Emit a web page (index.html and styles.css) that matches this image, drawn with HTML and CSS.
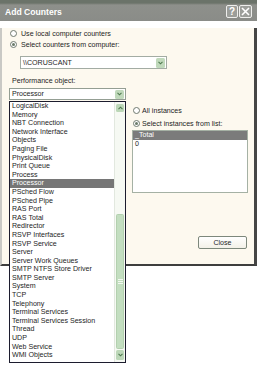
FILE: index.html
```html
<!DOCTYPE html>
<html>
<head>
<meta charset="utf-8">
<link rel="stylesheet" href="styles.css">
</head>
<body>
<div class="page">
<div class="dialog">
  <div class="titlebar">
    <span class="title">Add Counters</span>
    <div class="tbtns">
      <span class="tbtn">?</span>
      <span class="tbtn x"><svg width="9" height="9" viewBox="0 0 9 9"><path d="M1 1L8 8M8 1L1 8" stroke="#fff" stroke-width="1.6"/></svg></span>
    </div>
  </div>
  <div class="frame">
    <div class="radio r1"><span class="rb"></span>Use local computer counters</div>
    <div class="radio"><span class="rb on"></span>Select counters from computer:</div>
    <div class="combo machine"><span>\\CORUSCANT</span><span class="dd"><svg width="5" height="4" viewBox="0 0 5 4"><path d="M0.5 0.8L2.5 2.8L4.5 0.8" fill="none" stroke="#4f7a4f" stroke-width="1.1"/></svg></span></div>
    <div class="lbl">Performance object:</div>
    <div class="cols">
      <div class="leftcol">
        <div class="combo obj"><span>Processor</span><span class="dd"><svg width="5" height="4" viewBox="0 0 5 4"><path d="M0.5 0.8L2.5 2.8L4.5 0.8" fill="none" stroke="#4f7a4f" stroke-width="1.1"/></svg></span></div>
        <div class="droplist">
          <div class="items">
            <div class="item">LogicalDisk</div>
            <div class="item">Memory</div>
            <div class="item">NBT Connection</div>
            <div class="item">Network Interface</div>
            <div class="item">Objects</div>
            <div class="item">Paging File</div>
            <div class="item">PhysicalDisk</div>
            <div class="item">Print Queue</div>
            <div class="item">Process</div>
            <div class="item sel">Processor</div>
            <div class="item">PSched Flow</div>
            <div class="item">PSched Pipe</div>
            <div class="item">RAS Port</div>
            <div class="item">RAS Total</div>
            <div class="item">Redirector</div>
            <div class="item">RSVP Interfaces</div>
            <div class="item">RSVP Service</div>
            <div class="item">Server</div>
            <div class="item">Server Work Queues</div>
            <div class="item">SMTP NTFS Store Driver</div>
            <div class="item">SMTP Server</div>
            <div class="item">System</div>
            <div class="item">TCP</div>
            <div class="item">Telephony</div>
            <div class="item">Terminal Services</div>
            <div class="item">Terminal Services Session</div>
            <div class="item">Thread</div>
            <div class="item">UDP</div>
            <div class="item">Web Service</div>
            <div class="item">WMI Objects</div>
          </div>
          <div class="sb">
            <div class="sbtn up"><svg width="5" height="4" viewBox="0 0 5 4"><path d="M0.5 3.2L2.5 1.2L4.5 3.2" fill="none" stroke="#4f7a4f" stroke-width="1.1"/></svg></div>
            <div class="track"></div>
            <div class="thumb"><span class="grip"></span></div>
            <div class="sbtn down"><svg width="5" height="4" viewBox="0 0 5 4"><path d="M0.5 0.8L2.5 2.8L4.5 0.8" fill="none" stroke="#4f7a4f" stroke-width="1.1"/></svg></div>
          </div>
        </div>
      </div>
      <div class="rightcol">
        <div class="radio small r3"><span class="rb"></span>All instances</div>
        <div class="radio small r4"><span class="rb on"></span>Select instances from list:</div>
        <div class="listbox">
          <div class="row sel">_Total</div>
          <div class="row">0</div>
        </div>
        <div class="btn">Close</div>
      </div>
    </div>
  </div>
</div>
</div>
</body>
</html>
```
FILE: styles.css
```css
* { box-sizing: border-box; }
html, body { min-height: 365px; }
body {
  margin: 0;
  background: #fff;
  font-family: "Liberation Sans", Arial, sans-serif;
  font-size: 7.1px;
  color: #1e1e1e;
}
.page { min-height: 365px; }
.dialog { width: 257px; }
.titlebar {
  height: 21px;
  background: linear-gradient(#6b7369 0, #6b7369 3px, #8e908b 5px, #8a8c88 100%);
  display: flex;
  align-items: center;
  justify-content: space-between;
  padding: 0 5px 0 5px;
}
.title {
  color: #fff;
  font-weight: bold;
  font-size: 8.6px;
  margin-top: 3px;
}
.tbtns { display: flex; gap: 1px; margin-top: 2px; }
.tbtn {
  width: 12px;
  height: 13px;
  border: 1px solid #eeeeec;
  border-radius: 2px;
  background: #9c9e9a;
  color: #fff;
  font-size: 10px;
  font-weight: bold;
  display: flex;
  align-items: center;
  justify-content: center;
}
.tbtn.x { width: 13px; }
.frame {
  height: 238px;
  background: #fdf9ef;
  border-left: 2px solid #c9c9c5;
  border-right: 3px solid #464646;
  border-bottom: 2px solid #3e3e3e;
  padding-left: 8px;
}
.radio {
  display: flex;
  align-items: center;
  height: 11px;
  gap: 4px;
  white-space: nowrap;
}
.r1 { margin-top: 7px; }
.rb {
  flex: none;
  width: 7px;
  height: 7px;
  border-radius: 50%;
  border: 1px solid #6f7a70;
  background: #fff;
  position: relative;
}
.rb.on::after {
  content: "";
  position: absolute;
  inset: 1px;
  border-radius: 50%;
  background: #6b7b69;
}
.combo {
  display: flex;
  align-items: center;
  background: #fff;
  padding-left: 2px;
}
.combo .dd {
  margin-left: auto;
  margin-right: 1px;
  width: 9px;
  background: #c0d9bb;
  border-radius: 1.5px;
  display: flex;
  align-items: center;
  justify-content: center;
}
.machine {
  margin: 6px 0 0 10px;
  width: 147px;
  height: 13px;
  border: 1px solid #a3aca3;
}
.machine .dd { height: 10px; }
.lbl {
  margin: 7px 0 0 2px;
  height: 10px;
  line-height: 10px;
}
.cols {
  display: flex;
  gap: 6px;
  margin: 2px 0 0 -1px;
}
.leftcol { width: 117px; position: relative; }
.obj {
  height: 12px;
  border: 1px solid #949e93;
}
.obj .dd { height: 9px; }
.droplist {
  position: absolute;
  left: 0;
  top: 13px;
  width: 117px;
  height: 262px;
  background: #fff;
  border: 1px solid #1c1c2e;
  display: flex;
  z-index: 2;
}
.items { flex: 1; }
.item {
  height: 8.6px;
  line-height: 8.6px;
  padding-left: 2px;
  white-space: nowrap;
}
.item.sel { background: #767676; color: #fff; }
.sb {
  width: 11px;
  display: flex;
  flex-direction: column;
  padding: 2px 1px;
  background: #f6f9f3;
  border-left: 1px solid #e2e8df;
}
.sbtn {
  background: #bcd7b8;
  border-radius: 1.5px;
  display: flex;
  align-items: center;
  justify-content: center;
}
.sbtn.up { height: 8px; }
.sbtn.down { height: 10px; margin-top: 1px; }
.track { flex: 1; }
.thumb {
  height: 135px;
  background: #c3dec0;
  border: 1px solid #b3d0af;
  border-radius: 1.5px;
  display: flex;
  align-items: center;
  justify-content: center;
}
.grip {
  width: 5px;
  height: 5px;
  border-top: 1px solid #f2f8f0;
  border-bottom: 1px solid #f2f8f0;
  position: relative;
}
.grip::after {
  content: "";
  position: absolute;
  left: 0;
  right: 0;
  top: 1px;
  border-top: 1px solid #f2f8f0;
}
.rightcol {
  width: 116px;
  display: flex;
  flex-direction: column;
}
.radio.small { gap: 2px; margin-left: 1px; }
.r3 { margin-top: 17px; }
.r4 { margin-top: 2px; }
.listbox {
  margin-top: 1px;
  height: 63px;
  border: 1px solid #a5b1a4;
  background: #fff;
}
.row {
  height: 8.6px;
  line-height: 8.6px;
  padding-left: 2px;
}
.row.sel { background: #7b7b7b; color: #fff; }
.btn {
  align-self: flex-end;
  margin: 43px 1px 0 0;
  width: 49px;
  height: 13px;
  border: 1px solid #7d887c;
  border-radius: 2px;
  background: linear-gradient(#ffffff, #f3f1e8);
  display: flex;
  align-items: center;
  justify-content: center;
}
```
